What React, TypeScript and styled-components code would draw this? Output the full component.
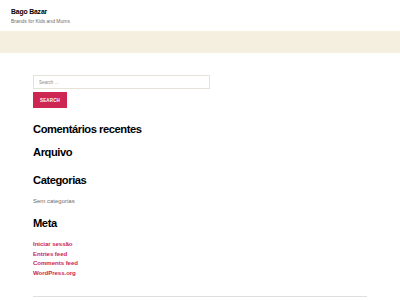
import React from "react";
import styled, { createGlobalStyle } from "styled-components";

const Global = createGlobalStyle`
  html, body { margin: 0; padding: 0; background: #ffffff; }
  body { font-family: "Liberation Sans", Arial, sans-serif; color: #000; }
  * { box-sizing: border-box; }
`;

const Page = styled.div`
  width: 400px;
  height: 300px;
  overflow: hidden;
  display: flex;
  flex-direction: column;
`;

const Header = styled.header`
  padding: 7px 11px 0;
  height: 31px;
`;

const SiteTitle = styled.div`
  font-size: 6.8px;
  font-weight: 700;
  letter-spacing: -0.02em;
  line-height: 9px;
`;

const SiteDesc = styled.div`
  font-size: 5px;
  color: #6d6d6d;
  margin-top: 2px;
  line-height: 7px;
`;

const Band = styled.div`
  height: 22px;
  background: #f5efe0;
`;

const Widgets = styled.main`
  padding: 22px 33px 0;
  display: flex;
  flex-direction: column;
`;

const SearchForm = styled.form`
  display: flex;
  flex-direction: column;
  align-items: flex-start;
  gap: 3px;
`;

const SearchInput = styled.div`
  width: 177px;
  height: 14px;
  border: 1px solid #e6e2d6;
  background: #fff;
  font-size: 4.5px;
  color: #8a8a8a;
  padding-left: 5px;
  display: flex;
  align-items: center;
`;

const SearchButton = styled.div`
  width: 34px;
  height: 16px;
  background: #cd2653;
  color: #fff;
  font-size: 4.5px;
  font-weight: 700;
  letter-spacing: 0.03em;
  display: flex;
  align-items: center;
  justify-content: center;
`;

const Heading = styled.h2<{ $top: number }>`
  margin: ${(p) => p.$top}px 0 0;
  font-size: 11.2px;
  font-weight: 700;
  letter-spacing: -0.04em;
  line-height: 13px;
`;

const Plain = styled.div`
  margin-top: 9.5px;
  font-size: 6px;
  color: #6d6d6d;
  line-height: 8px;
`;

const LinkList = styled.ul`
  list-style: none;
  margin: 10.5px 0 0;
  padding: 0;
  display: flex;
  flex-direction: column;
  gap: 1.6px;
`;

const LinkItem = styled.li`
  font-size: 6.1px;
  font-weight: 700;
  color: #cd2653;
  line-height: 8px;
  letter-spacing: -0.01em;
`;

const Rule = styled.div`
  margin: 19px 33px 0;
  height: 1px;
  background: #dedfdf;
`;

export default function App() {
  return (
    <Page>
      <Global />
      <Header>
        <SiteTitle>Bago Bazar</SiteTitle>
        <SiteDesc>Brands for Kids and Mums</SiteDesc>
      </Header>
      <Band />
      <Widgets>
        <SearchForm>
          <SearchInput>Search …</SearchInput>
          <SearchButton>SEARCH</SearchButton>
        </SearchForm>
        <Heading $top={15}>Comentários recentes</Heading>
        <Heading $top={10}>Arquivo</Heading>
        <Heading $top={15}>Categorias</Heading>
        <Plain>Sem categorias</Plain>
        <Heading $top={12}>Meta</Heading>
        <LinkList>
          <LinkItem>Iniciar sessão</LinkItem>
          <LinkItem>Entries feed</LinkItem>
          <LinkItem>Comments feed</LinkItem>
          <LinkItem>WordPress.org</LinkItem>
        </LinkList>
      </Widgets>
      <Rule />
    </Page>
  );
}
